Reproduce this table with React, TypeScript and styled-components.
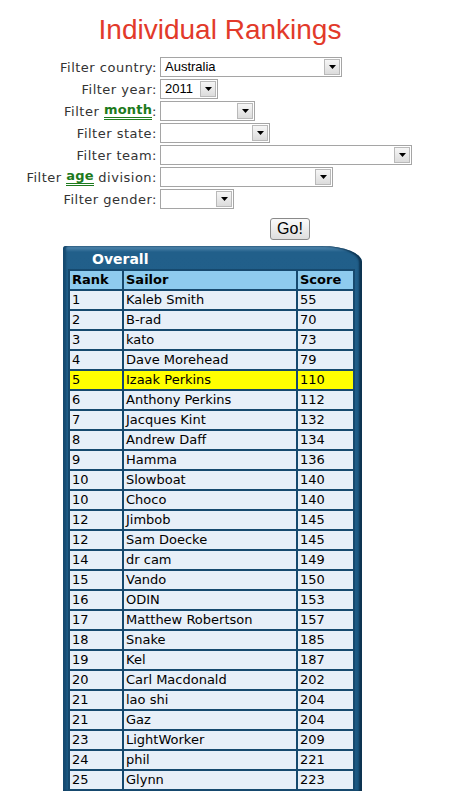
import * as React from "react";
import styled, { createGlobalStyle } from "styled-components";

type Row = { rank: number; sailor: string; score: number };

const rows: Row[] = [
  { rank: 1, sailor: "Kaleb Smith", score: 55 },
  { rank: 2, sailor: "B-rad", score: 70 },
  { rank: 3, sailor: "kato", score: 73 },
  { rank: 4, sailor: "Dave Morehead", score: 79 },
  { rank: 5, sailor: "Izaak Perkins", score: 110 },
  { rank: 6, sailor: "Anthony Perkins", score: 112 },
  { rank: 7, sailor: "Jacques Kint", score: 132 },
  { rank: 8, sailor: "Andrew Daff", score: 134 },
  { rank: 9, sailor: "Hamma", score: 136 },
  { rank: 10, sailor: "Slowboat", score: 140 },
  { rank: 10, sailor: "Choco", score: 140 },
  { rank: 12, sailor: "Jimbob", score: 145 },
  { rank: 12, sailor: "Sam Doecke", score: 145 },
  { rank: 14, sailor: "dr cam", score: 149 },
  { rank: 15, sailor: "Vando", score: 150 },
  { rank: 16, sailor: "ODIN", score: 153 },
  { rank: 17, sailor: "Matthew Robertson", score: 157 },
  { rank: 18, sailor: "Snake", score: 185 },
  { rank: 19, sailor: "Kel", score: 187 },
  { rank: 20, sailor: "Carl Macdonald", score: 202 },
  { rank: 21, sailor: "lao shi", score: 204 },
  { rank: 21, sailor: "Gaz", score: 204 },
  { rank: 23, sailor: "LightWorker", score: 209 },
  { rank: 24, sailor: "phil", score: 221 },
  { rank: 25, sailor: "Glynn", score: 223 },
];

const HIGHLIGHT = "Izaak Perkins";

const Select: React.FC<{ width: number; value?: string }> = ({ width, value }) => (
  <SelectBox $width={width}>
    <SelectValue>{value}</SelectValue>
    <ArrowButton>
      <svg width="7" height="4" viewBox="0 0 7 4">
        <path d="M0 0h7L3.5 4z" fill="#000" />
      </svg>
    </ArrowButton>
  </SelectBox>
);

const App: React.FC = () => {
  return (
    <Page>
      <GlobalStyle />
      <Title>Individual Rankings</Title>
      <FilterForm>
        <Label>Filter country:</Label>
        <Select width={182} value="Australia" />
        <Label>Filter year:</Label>
        <Select width={58} value="2011" />
        <Label>
          Filter <Hint>month</Hint>:
        </Label>
        <Select width={95} />
        <Label>Filter state:</Label>
        <Select width={110} />
        <Label>Filter team:</Label>
        <Select width={252} />
        <Label>
          Filter <Hint>age</Hint> division:
        </Label>
        <Select width={173} />
        <Label>Filter gender:</Label>
        <Select width={74} />
      </FilterForm>
      <ButtonRow>
        <GoButton>Go!</GoButton>
      </ButtonRow>
      <Panel>
        <PanelTitle>Overall</PanelTitle>
        <RankTable>
          <colgroup>
            <col style={{ width: 52 }} />
            <col style={{ width: 172 }} />
            <col />
          </colgroup>
          <thead>
            <tr>
              <HeadCell>Rank</HeadCell>
              <HeadCell>Sailor</HeadCell>
              <HeadCell>Score</HeadCell>
            </tr>
          </thead>
          <tbody>
            {rows.map((r, i) => (
              <BodyRow key={i} $highlight={r.sailor === HIGHLIGHT}>
                <Cell>{r.rank}</Cell>
                <Cell>{r.sailor}</Cell>
                <Cell>{r.score}</Cell>
              </BodyRow>
            ))}
          </tbody>
        </RankTable>
      </Panel>
    </Page>
  );
};

const GlobalStyle = createGlobalStyle`
  html, body {
    margin: 0;
    padding: 0;
    background: #fff;
  }
`;

const Page = styled.div`
  width: 440px;
  height: 791px;
  overflow: hidden;
  font-family: "DejaVu Sans", Verdana, sans-serif;
`;

const Title = styled.h1`
  margin: 0;
  padding-top: 14px;
  height: 44px;
  box-sizing: border-box;
  text-align: center;
  font-family: "Liberation Sans", Arial, sans-serif;
  font-weight: normal;
  font-size: 28px;
  line-height: 32px;
  color: #e23a2a;
`;

const FilterForm = styled.div`
  display: grid;
  grid-template-columns: 157px auto;
  column-gap: 3px;
  row-gap: 2px;
  padding-top: 13px;
`;

const Label = styled.div`
  display: flex;
  align-items: center;
  justify-content: flex-end;
  height: 20px;
  font-size: 13px;
  letter-spacing: 0.5px;
  color: #333;
  white-space: pre;
`;

const Hint = styled.span`
  font-weight: bold;
  letter-spacing: 0.2px;
  color: #1d7a1d;
  border-bottom: 3px double #1d7a1d;
  line-height: 14px;
`;

const SelectBox = styled.div<{ $width: number }>`
  display: flex;
  align-items: center;
  justify-content: space-between;
  box-sizing: border-box;
  width: ${p => p.$width}px;
  height: 20px;
  padding: 1px 1px 1px 4px;
  border: 1px solid #a5a5a5;
  background: #fff;
  font-family: "Liberation Sans", Arial, sans-serif;
  font-size: 13px;
  color: #000;
`;

const SelectValue = styled.span`
  line-height: 16px;
`;

const ArrowButton = styled.div`
  display: flex;
  align-items: center;
  justify-content: center;
  box-sizing: border-box;
  width: 16px;
  height: 16px;
  border: 1px solid #b9b9b9;
  background: linear-gradient(#f6f6f6, #dcdcdc);
`;

const ButtonRow = styled.div`
  display: flex;
  padding: 9px 0 0 270px;
  height: 22px;
`;

const GoButton = styled.button`
  box-sizing: border-box;
  width: 40px;
  height: 22px;
  padding: 0;
  border: 1px solid #8a8a8a;
  border-radius: 3px;
  background: linear-gradient(#fafafa, #dedede);
  font-family: "Liberation Sans", Arial, sans-serif;
  font-size: 16px;
  color: #000;
`;

const Panel = styled.div`
  margin: 6px 0 0 63px;
  width: 299px;
  box-sizing: border-box;
  padding: 5px 7px 0 5px;
  border-radius: 3px 40px 0 0 / 3px 16px 0 0;
  background: linear-gradient(#5a8fb5 0, #215f8a 6px, #1b5882 100%);
  box-shadow: inset -3px 0 2px #0d3350, inset 3px 0 2px #164a70;
`;

const PanelTitle = styled.div`
  padding-left: 24px;
  height: 18px;
  font-size: 14px;
  font-weight: bold;
  line-height: 16px;
  color: #fff;
`;

const RankTable = styled.table`
  width: 287px;
  table-layout: fixed;
  border-collapse: separate;
  border-spacing: 2px;
  background: #16496e;
  font-size: 13px;
`;

const HeadCell = styled.th`
  height: 18px;
  padding: 0 2px;
  text-align: left;
  font-weight: bold;
  background: #8ecbee;
  color: #000;
  line-height: 18px;
`;

const BodyRow = styled.tr<{ $highlight: boolean }>`
  background: ${p => (p.$highlight ? "#ffff00" : "#e7eff8")};
`;

const Cell = styled.td`
  height: 18px;
  padding: 0 2px;
  line-height: 18px;
  color: #000;
  white-space: nowrap;
`;

export default App;
